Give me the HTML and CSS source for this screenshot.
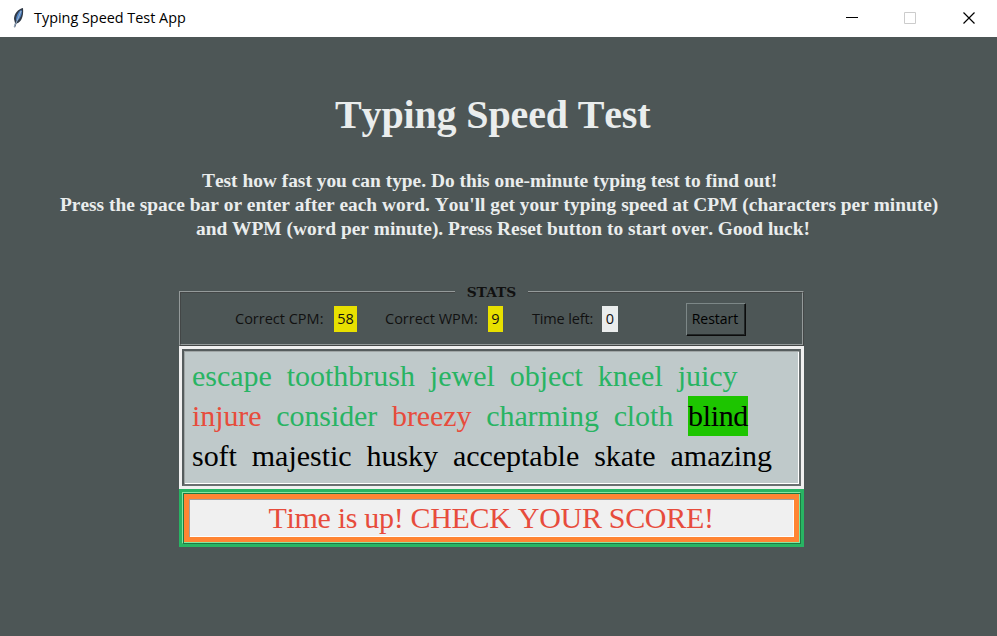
FILE: index.html
```html
<!DOCTYPE html>
<html lang="en">
<head>
<meta charset="utf-8">
<title>Typing Speed Test App</title>
<link rel="stylesheet" href="styles.css">
</head>
<body>
<header class="titlebar">
  <svg class="feather" width="16" height="22" viewBox="0 0 16 22"><path d="M12 1C7 2 3 7 3 12l1 4-1 4 1 .5 1.500-4c4-1 7.500-6 6.500-15.500z" fill="#303a48"/><path d="M10 3C7 5 5 9 5 13l1 1c3-2 5-6 5-10z" fill="#4f83c4"/><path d="M10 4 6 14 3 20" fill="none" stroke="#9db4cc"/></svg>
  <span class="caption">Typing Speed Test App</span>
  <svg class="controls" width="140" height="36" viewBox="0 0 140 36" fill="none"><path d="M6 17.500h12" stroke="#000"/><path d="M64.500 12.500h11v11h-11z" stroke="#ccc"/><path d="m123.500 12.500 11 11m0-11-11 11" stroke="#000" stroke-width="1.200"/></svg>
</header>
<main>
  <h1>Typing Speed Test</h1>
  <div class="intro">
    <p class="line one">Test how fast you can type. Do this one-minute typing test to find out!</p>
    <p class="line two">Press the space bar or enter after each word. You'll get your typing speed at CPM (characters per minute)</p>
    <p class="line three">and WPM (word per minute). Press Reset button to start over. Good luck!</p>
  </div>
  <section class="panel">
    <fieldset class="stats">
      <legend>STATS</legend>
      <div class="row">
        <span class="label cpm">Correct CPM:</span><span class="value v58">58</span>
        <span class="label wpm">Correct WPM:</span><span class="value v9">9</span>
        <span class="label time">Time left:</span><span class="value v0">0</span>
        <button><span>Restart</span></button>
      </div>
    </fieldset>
    <div class="words"><div class="wordbox"><span class="first ok">escape  toothbrush  jewel  object  kneel  juicy</span>
<span class="second"><span class="bad">injure</span>  <span class="ok">consider</span>  <span class="bad">breezy</span>  <span class="ok">charming  cloth</span>  </span><span class="current">blind</span>
<span class="third">soft  majestic  husky  acceptable  skate  amazing</span></div></div>
    <div class="entry"><div class="ring"><div class="field">Time is up! CHECK YOUR SCORE!</div></div></div>
  </section>
</main>
</body>
</html>
```
FILE: styles.css
```css
* { box-sizing: border-box; }
body { margin: 0; width: 997px; height: 636px; overflow: hidden; background: #4d5656; font-family: "Liberation Serif", serif; font-kerning: none; }
.titlebar { height: 37px; background: #fff; display: flex; align-items: center; padding: 0 17px 2px 11px; }
.caption { font: 14.4px/20px "Open Sans", sans-serif; color: #000; margin-left: 7px; padding-top: 1px; }
.controls { margin-left: auto; }
h1 { margin: 55px 0 0; padding-left: 335px; font-size: 40px; line-height: 46px; letter-spacing: -0.14px; color: #eaeded; white-space: nowrap; }
.intro { margin-top: 31px; color: #eaeded; font-weight: bold; font-size: 19.4px; line-height: 24px; white-space: nowrap; }
.line { margin: 0; }
.one { padding-left: 202px; }
.two { padding-left: 60px; }
.three { padding-left: 196px; }
.panel { width: 625px; margin: 42px 0 0 179px; }
.stats { margin: 0; padding: 0; height: 63px; min-width: 0; border: 2px ridge #949a9a; }
legend { margin: 0 auto; width: 73px; padding: 0; text-align: center; font: bold 13.8px/18px "DejaVu Serif", serif; color: #111; }
.row { display: flex; align-items: center; height: 36px; font: 14.5px/26px "Open Sans", sans-serif; color: #111; }
.label { white-space: nowrap; }
.cpm { margin-left: 54px; width: 99px; }
.wpm { margin-left: 28px; width: 103px; }
.time { margin-left: 29px; width: 70px; letter-spacing: -0.15px; }
.value { height: 26px; text-align: center; background: #e8e000; }
.v58 { width: 23px; }
.v9 { width: 15px; }
.v0 { width: 16px; background: #eaeded; }
button { width: 60px; height: 33px; margin-left: 68px; padding: 0 2px 0 0; background: #4d5656; border: 1px solid; border-color: #7d8787 #0c0c0c #0c0c0c #7d8787; box-shadow: inset -1px -1px #222727; font: inherit; font-size: 14px; color: #000; }
.words { height: 143px; border: 3px solid #f0f0f0; }
.wordbox { height: 137px; border: 2px solid; border-color: #555c5d #686e6f #686e6f #555c5d; box-shadow: inset 1px 1px #a0a6a6, inset -1px -1px #fff; background: #bfc9ca; padding: 5px 8px; font-size: 30px; line-height: 40px; white-space: pre; color: #000; }
.ok { color: #28b463; }
.bad { color: #e74c3c; }
.first { letter-spacing: -0.02px; }
.second { letter-spacing: -0.09px; }
.third { letter-spacing: -0.03px; }
.current { display: inline-block; height: 40px; background: #1dc500; letter-spacing: -0.33px; }
.entry { height: 58px; border: 3px solid #28b463; }
.ring { height: 52px; padding: 1px; border: 1px solid; border-color: #83e8a2 #1e7a43 #1e7a43 #83e8a2; box-shadow: inset 1px 1px #1e7a43, inset -1px -1px #83e8a2; }
.field { height: 48px; border: 5px solid #ff8533; box-shadow: inset 1px 1px #a0a0a0, inset -1px -1px #fff; background: #f0f0f0; font-size: 30px; line-height: 37px; letter-spacing: -0.31px; padding-right: 1px; text-align: center; color: #e74c3c; }
```
